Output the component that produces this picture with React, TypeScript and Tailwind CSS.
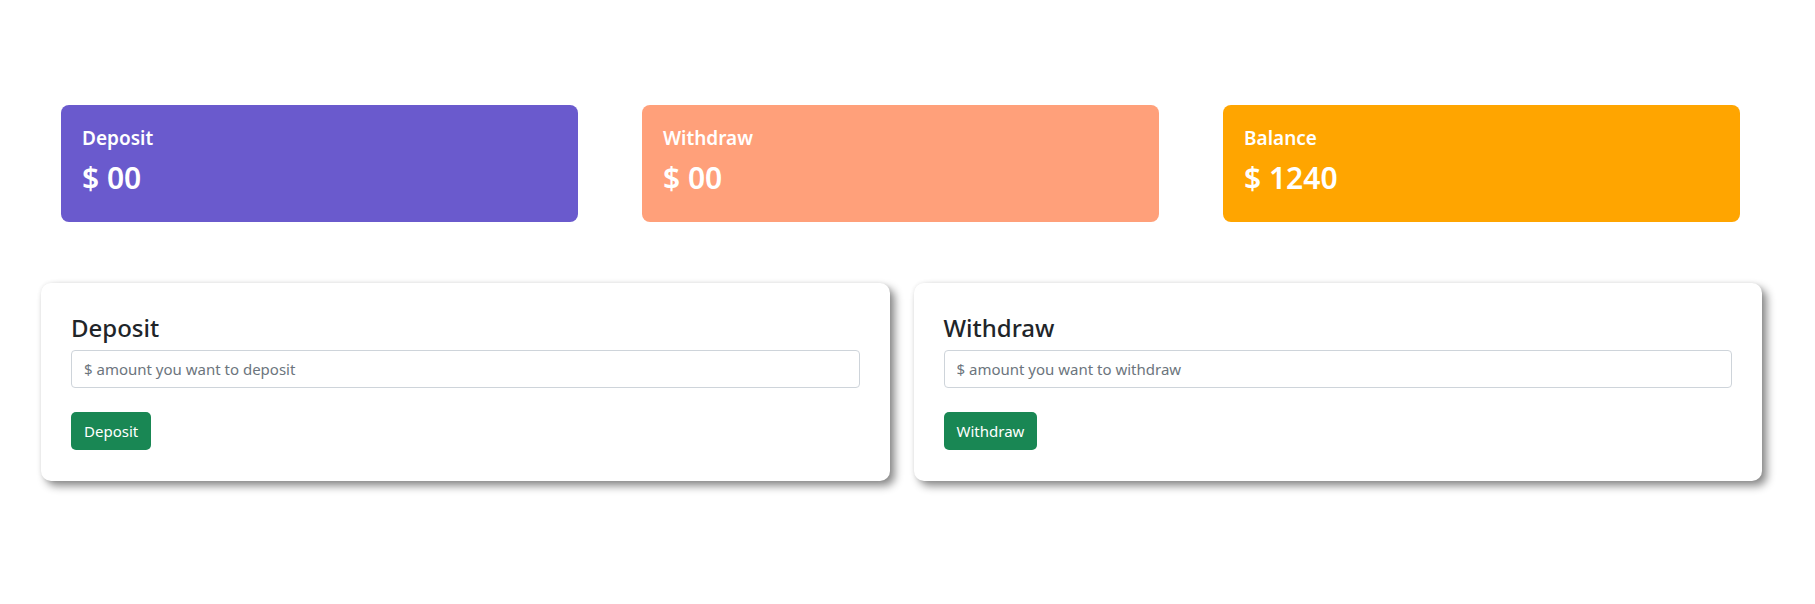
const stats = [
  { label: "Deposit", value: "$ 00", bg: "bg-[#6a5acd]" },
  { label: "Withdraw", value: "$ 00", bg: "bg-[#ffa07a]" },
  { label: "Balance", value: "$ 1240", bg: "bg-[#ffa500]" },
];

const forms = [
  { title: "Deposit", placeholder: "$ amount you want to deposit", button: "Deposit" },
  { title: "Withdraw", placeholder: "$ amount you want to withdraw", button: "Withdraw" },
];

export default function App() {
  return (
    <div className="min-h-screen bg-white font-['Noto_Sans',sans-serif]">
      {/* summary cards */}
      <div className="flex gap-16 pl-[61px] pr-[75px] pt-[105px]">
        {stats.map((s) => (
          <div key={s.label} className={`flex-1 h-[117px] rounded-lg px-[21px] pt-[22px] text-white ${s.bg}`}>
            <h6 className="text-[19px] font-semibold leading-[1.2]">{s.label}</h6>
            <h2 className="mt-[10px] text-[30px] font-semibold leading-[1.2]">{s.value}</h2>
          </div>
        ))}
      </div>

      {/* transaction forms */}
      <div className="flex gap-6 pl-[41px] pr-[53px] mt-[61px]">
        {forms.map((f) => (
          <div
            key={f.title}
            className="flex-1 rounded-[10px] bg-white px-[30px] pt-[31px] pb-[31px] shadow-[0_0_4px_rgba(0,0,0,0.08),5px_5px_8px_rgba(0,0,0,0.45)]"
          >
            <h4 className="text-[24px] font-medium leading-[1.2] text-[#212529]">{f.title}</h4>
            <input
              type="text"
              placeholder={f.placeholder}
              className="mt-[7px] block w-full h-[38px] rounded-[4px] border border-[#ced4da] px-3 text-[15px] text-[#212529] placeholder:text-[#6c757d] outline-none"
            />
            <button className="mt-6 h-[38px] rounded-[5px] bg-[#198754] px-[13px] text-[15px] text-white">
              {f.button}
            </button>
          </div>
        ))}
      </div>
    </div>
  );
}
